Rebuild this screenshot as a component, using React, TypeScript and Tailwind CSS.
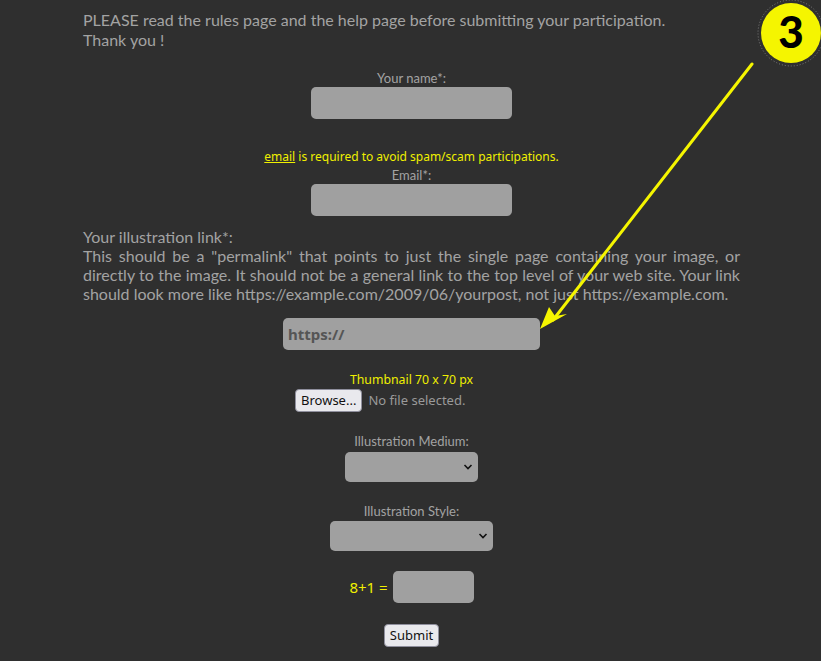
import React from "react";

const lato = { fontFamily: "Lato, 'Noto Sans', sans-serif" };
const noto = { fontFamily: "'Noto Sans', 'Open Sans', sans-serif" };

function Chevron() {
  return (
    <svg width="10" height="7" viewBox="0 0 10 7" className="pointer-events-none absolute right-[5px] top-1/2 -translate-y-1/2">
      <path d="M1.5 1.5 L5 5 L8.5 1.5" fill="none" stroke="#111" strokeWidth="1.6" />
    </svg>
  );
}

function FakeSelect({ width, height }: { width: string; height: string }) {
  return (
    <div className={`relative ${width} ${height}`}>
      <select className="h-full w-full appearance-none rounded-[5px] bg-[#a0a0a0] outline-none" />
      <Chevron />
    </div>
  );
}

export default function App() {
  return (
    <div className="relative min-h-[661px] w-full overflow-hidden bg-[#2f2f2f]">
      <div className="ml-[83px] w-[657px] pt-[10px] text-[#a3a3a3]" style={lato}>
        <p className="text-[16px] leading-[20px]">
          PLEASE read the rules page and the help page before submitting your participation.
          <br />
          Thank you !
        </p>

        <div className="mt-[19px] flex flex-col items-center">
          <label className="text-[13px] leading-[18px]">Your name*:</label>
          <input className="h-[32px] w-[201px] rounded-[5px] bg-[#a0a0a0] outline-none" />
        </div>

        <div className="mt-[28px] flex flex-col items-center">
          <p className="text-[12px] leading-[19px] text-[#f0f000]" style={noto}>
            <span className="underline">email</span> is required to avoid spam/scam participations.
          </p>
          <label className="text-[13px] leading-[18px]">Email*:</label>
          <input className="h-[32px] w-[201px] rounded-[5px] bg-[#a0a0a0] outline-none" />
        </div>

        <div className="mt-[11px] text-[16px] leading-[19px]">
          <p>Your illustration link*:</p>
          <p className="text-justify">
            This should be a "permalink" that points to just the single page containing your image, or
            directly to the image. It should not be a general link to the top level of your web site. Your link
            should look more like https://example.com/2009/06/yourpost, not just https://example.com.
          </p>
        </div>

        <div className="mt-[15px] flex justify-center">
          <input
            placeholder="https://"
            className="h-[32px] w-[257px] rounded-[5px] bg-[#a0a0a0] px-[5px] text-[15px] font-bold text-[#555] outline-none placeholder:text-[#555]"
            style={noto}
          />
        </div>

        <div className="mt-[20px] flex flex-col items-center">
          <p className="text-[12.3px] leading-[19px] text-[#f0f000]" style={noto}>Thumbnail 70 x 70 px</p>
          <div className="flex w-[233px] items-center gap-[6px]" style={noto}>
            <button className="h-[23px] rounded-[4px] border border-[#8f8f9d] bg-[#e9e9ed] px-[5px] text-[13px] leading-none text-[#111]">
              Browse...
            </button>
            <span className="text-[13px] text-[#9a9a9a]">No file selected.</span>
          </div>
        </div>

        <div className="mt-[19px] flex flex-col items-center">
          <label className="text-[13px] leading-[21px]">Illustration Medium:</label>
          <FakeSelect width="w-[133px]" height="h-[30px]" />
        </div>

        <div className="mt-[20px] flex flex-col items-center">
          <label className="text-[13px] leading-[19px]">Illustration Style:</label>
          <FakeSelect width="w-[163px]" height="h-[30px]" />
        </div>

        <div className="mt-[20px] flex items-center justify-center gap-[5px]">
          <span className="text-[15px] text-[#f0f000]" style={noto}>8+1 =</span>
          <input className="h-[32px] w-[81px] rounded-[5px] bg-[#a0a0a0] outline-none" />
        </div>

        <div className="mt-[21px] flex justify-center pb-[14px]" style={noto}>
          <button className="h-[23px] rounded-[4px] border border-[#8f8f9d] bg-[#e9e9ed] px-[5px] text-[13px] leading-none text-[#111]">
            Submit
          </button>
        </div>
      </div>

      <svg className="pointer-events-none absolute left-0 top-0" width="821" height="661" viewBox="0 0 821 661">
        <line x1="752" y1="64" x2="553" y2="320" stroke="#f5f500" strokeWidth="3" strokeLinecap="round" />
        <polygon points="540,329 549,307 555,316 567,314" fill="#f5f500" />
        <circle cx="791" cy="33" r="33" fill="none" stroke="#ffffff" strokeOpacity="0.35" strokeWidth="1" strokeDasharray="1 2" />
        <circle cx="791" cy="33" r="30" fill="#f5f500" />
        <text x="791" y="48" textAnchor="middle" fontFamily="Lato, sans-serif" fontWeight="900" fontSize="44" fill="#000">3</text>
      </svg>
    </div>
  );
}
